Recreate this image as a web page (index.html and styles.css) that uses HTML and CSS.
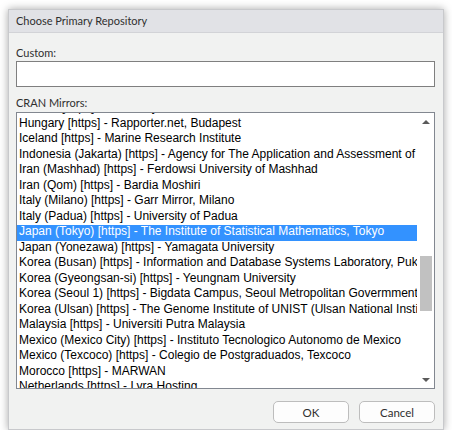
FILE: index.html
```html
<!DOCTYPE html>
<html>
<head>
<meta charset="utf-8">
<link rel="stylesheet" href="styles.css">
</head>
<body>
<div class="dialog">
  <div class="titlebar">Choose Primary Repository</div>
  <div class="content">
    <label class="label">Custom:</label>
    <div class="input"></div>
    <label class="label label-cran">CRAN Mirrors:</label>
    <div class="listbox">
      <div class="list-view">
        <div class="items">
          <div class="row">Greece [https] - University of Crete</div>
          <div class="row">Hungary [https] - Rapporter.net, Budapest</div>
          <div class="row">Iceland [https] - Marine Research Institute</div>
          <div class="row">Indonesia (Jakarta) [https] - Agency for The Application and Assessment of Technology</div>
          <div class="row">Iran (Mashhad) [https] - Ferdowsi University of Mashhad</div>
          <div class="row">Iran (Qom) [https] - Bardia Moshiri</div>
          <div class="row">Italy (Milano) [https] - Garr Mirror, Milano</div>
          <div class="row">Italy (Padua) [https] - University of Padua</div>
          <div class="row selected">Japan (Tokyo) [https] - The Institute of Statistical Mathematics, Tokyo</div>
          <div class="row">Japan (Yonezawa) [https] - Yamagata University</div>
          <div class="row">Korea (Busan) [https] - Information and Database Systems Laboratory, Pukyong National University</div>
          <div class="row">Korea (Gyeongsan-si) [https] - Yeungnam University</div>
          <div class="row">Korea (Seoul 1) [https] - Bigdata Campus, Seoul Metropolitan Govermment</div>
          <div class="row">Korea (Ulsan) [https] - The Genome Institute of UNIST (Ulsan National Institute of Science and Technology)</div>
          <div class="row">Malaysia [https] - Universiti Putra Malaysia</div>
          <div class="row">Mexico (Mexico City) [https] - Instituto Tecnologico Autonomo de Mexico</div>
          <div class="row">Mexico (Texcoco) [https] - Colegio de Postgraduados, Texcoco</div>
          <div class="row">Morocco [https] - MARWAN</div>
          <div class="row">Netherlands [https] - Lyra Hosting</div>
          <div class="row">New Zealand [https] - University of Auckland</div>
        </div>
      </div>
      <div class="scrollbar">
        <div class="sb-btn"><span class="arrow-up"></span></div>
        <div class="sb-track"><div class="sb-thumb"></div></div>
        <div class="sb-btn"><span class="arrow-down"></span></div>
      </div>
    </div>
    <div class="buttons">
      <button class="btn">OK</button>
      <button class="btn">Cancel</button>
    </div>
  </div>
</div>
</body>
</html>
```

FILE: styles.css
```css
html, body {
  margin: 0;
  padding: 0;
  background: #ffffff;
}

body {
  padding: 9px 8px 0 8px;
  font-family: "Lato", "Open Sans", sans-serif;
}

.dialog {
  width: 436px;
  height: 421px;
  box-sizing: border-box;
  border: 1px solid #c8c9cc;
  background: #f1f2f1;
  box-shadow: 0 0 8px rgba(0, 0, 0, 0.35);
  display: flex;
  flex-direction: column;
}

.titlebar {
  height: 23px;
  box-sizing: border-box;
  background: #e1e2e6;
  border-bottom: 1px solid #d2d3d7;
  padding-left: 7px;
  font-size: 11px;
  line-height: 22px;
  color: #2f2f2f;
}

.content {
  flex: 1;
  display: flex;
  flex-direction: column;
  padding: 12px 8px 0 7px;
}

.label {
  display: block;
  font-size: 11px;
  line-height: 16px;
  color: #2f2f2f;
}

.input {
  height: 26px;
  box-sizing: border-box;
  border: 1px solid #7f7f7f;
  background: #ffffff;
}

.label-cran {
  margin-top: 8px;
  margin-bottom: 1px;
}

.listbox {
  height: 277px;
  box-sizing: border-box;
  border: 1px solid #828790;
  background: #ffffff;
  display: flex;
}

.list-view {
  flex: 1;
  overflow: hidden;
  min-width: 0;
}

.items {
  margin-top: -11.7px;
}

.row {
  white-space: nowrap;
  font-family: "Liberation Sans", Arial, sans-serif;
  font-size: 12px;
  line-height: 12.5px;
  height: 15.5px;
  padding-left: 2px;
  color: #000000;
}

.row.selected {
  background: #3392ff;
  color: #ffffff;
}

.scrollbar {
  width: 17px;
  flex: none;
  display: flex;
  flex-direction: column;
  background: #ffffff;
}

.sb-btn {
  height: 17px;
  display: flex;
  align-items: center;
  justify-content: center;
}

.arrow-up {
  width: 0;
  height: 0;
  border-left: 4px solid transparent;
  border-right: 4px solid transparent;
  border-bottom: 4px solid #5a5a5a;
}

.arrow-down {
  width: 0;
  height: 0;
  border-left: 4px solid transparent;
  border-right: 4px solid transparent;
  border-top: 4px solid #5a5a5a;
}

.sb-track {
  flex: 1;
}

.sb-thumb {
  margin-top: 126px;
  margin-left: 3px;
  width: 12px;
  height: 55px;
  background: #c1c1c1;
}

.buttons {
  display: flex;
  justify-content: flex-end;
  gap: 10px;
  margin-top: 12px;
}

.btn {
  width: 76px;
  height: 22px;
  box-sizing: border-box;
  border: 1px solid #bdbdbd;
  border-radius: 5px;
  background: #fdfdfd;
  font-family: "Lato", "Open Sans", sans-serif;
  font-size: 11.5px;
  color: #2f2f2f;
  padding: 0;
}
```
